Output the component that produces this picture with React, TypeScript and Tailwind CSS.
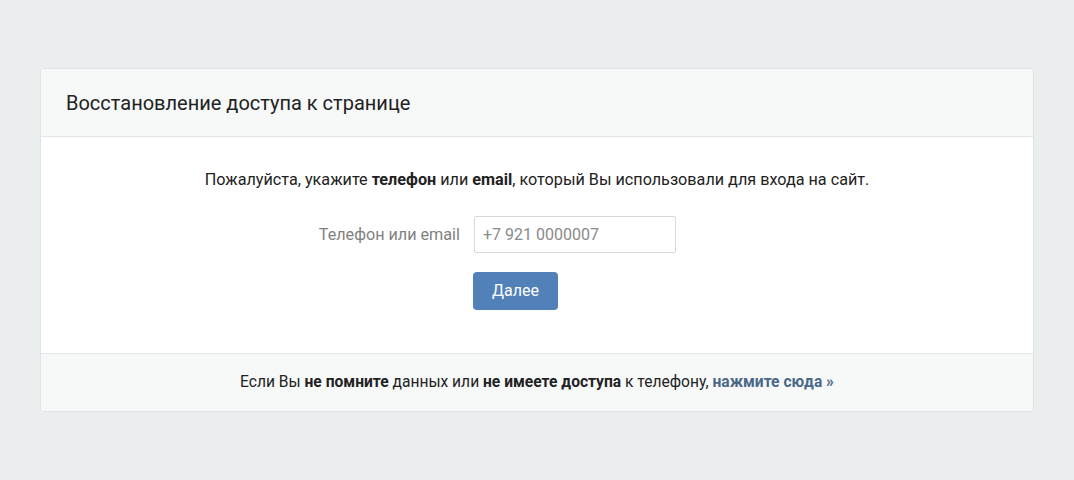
export default function App() {
  return (
    <div
      className="min-h-[480px] bg-[#ebeeef] px-10 pt-[68px]"
      style={{ fontFamily: "Roboto, 'Open Sans', sans-serif" }}
    >
      <div className="overflow-hidden rounded-[4px] border border-[#dfe3e6] bg-white">
        <div className="flex h-[68px] items-center border-b border-[#e3e6e8] bg-[#f7f9f9] px-[25px]">
          <h1 className="text-[20px] font-normal text-[#222]">Восстановление доступа к странице</h1>
        </div>

        <div className="flex flex-col pb-[43px] pt-[31px]">
          <p className="text-center text-[16.2px] text-[#222]">
            Пожалуйста, укажите <b className="font-bold">телефон</b> или{" "}
            <b className="font-bold">email</b>, который Вы использовали для входа на сайт.
          </p>

          <div className="mt-[24px] grid grid-cols-[433px_1fr] items-center">
            <label className="pr-[14px] text-right text-[16.2px] text-[#818181]">Телефон или email</label>
            <input
              placeholder="+7 921 0000007"
              className="h-[37px] w-[202px] rounded-[2px] border border-[#d3d9de] bg-white px-[8px] text-[16px] text-[#222] outline-none placeholder:text-[#8a8a8a]"
            />
          </div>

          <div className="mt-[19px] grid grid-cols-[432px_1fr]">
            <div />
            <button className="h-[38px] w-[85px] rounded-[4px] bg-[#5181b8] text-[16px] text-white">
              Далее
            </button>
          </div>
        </div>

        <div className="flex h-[58px] items-center justify-center border-t border-[#e3e6e8] bg-[#f7f9f9] text-[15.6px] text-[#222]">
          <p>
            Если Вы <b className="font-bold">не помните</b> данных или{" "}
            <b className="font-bold">не имеете доступа</b> к телефону,{" "}
            <a href="#" className="font-bold text-[#4a6888]">нажмите сюда »</a>
          </p>
        </div>
      </div>
    </div>
  );
}
